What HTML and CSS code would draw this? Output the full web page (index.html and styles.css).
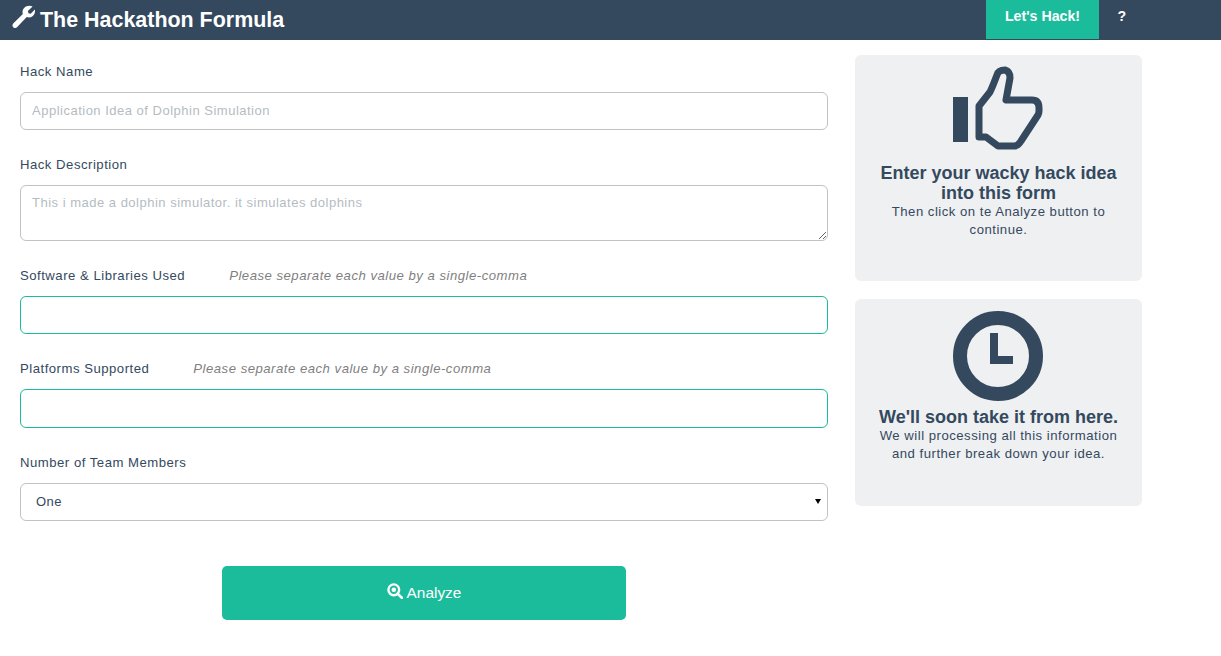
FILE: index.html
```html
<!DOCTYPE html>
<html lang="en">
<head>
<meta charset="utf-8">
<title>The Hackathon Formula</title>
<link rel="stylesheet" href="styles.css">
</head>
<body>
<header class="navbar">
  <div class="brand">
    <svg class="wrench" viewBox="0 0 24 24" aria-hidden="true"><path d="M21.5 1.5 16.6 6.3l.6 2.3 2.3.6 4.4-4.4c.5 3-.4 5.4-2.5 7-1.9 1.4-4 1.6-6 .8L5.2 23.2c-1.1 1.1-3 1.1-4-.1-1-1.1-1-2.7.1-3.8l10-9.9c-.7-2.2-.3-4.4 1.3-6.2 2.3-2.4 5.6-3 8.9-1.7z"/></svg>
    <span class="brand-text">The Hackathon Formula</span>
  </div>
  <nav class="nav">
    <a class="nav-cta">Let's Hack!</a>
    <a class="nav-help">?</a>
  </nav>
</header>
<main class="content">
  <form class="form">
    <div class="field field-name">
      <div class="label-row"><label class="label">Hack Name</label></div>
      <input class="control" type="text" placeholder="Application Idea of Dolphin Simulation">
    </div>
    <div class="field field-desc">
      <div class="label-row"><label class="label">Hack Description</label></div>
      <textarea class="control control-area" placeholder="This i made a dolphin simulator. it simulates dolphins"></textarea>
    </div>
    <div class="field field-soft">
      <div class="label-row"><label class="label">Software &amp; Libraries Used</label><em class="hint">Please separate each value by a single-comma</em></div>
      <input class="control control-accent" type="text">
    </div>
    <div class="field field-plat">
      <div class="label-row"><label class="label">Platforms Supported</label><em class="hint">Please separate each value by a single-comma</em></div>
      <input class="control control-accent control-tall" type="text">
    </div>
    <div class="field field-team">
      <div class="label-row"><label class="label">Number of Team Members</label></div>
      <div class="select-wrap">
        <select class="control control-select"><option>One</option><option>Two</option><option>Three</option></select>
      </div>
    </div>
    <div class="actions">
      <button class="analyze" type="button">
        <svg class="search" viewBox="0 0 16 16" aria-hidden="true"><circle cx="6.8" cy="6.8" r="5.4" fill="none" stroke="#fff" stroke-width="2.4"/><circle cx="6.8" cy="6.8" r="2.3" fill="#fff"/><path d="M10.6 10.6 15 15" stroke="#fff" stroke-width="2.6" stroke-linecap="round"/></svg>
        <span>Analyze</span>
      </button>
    </div>
  </form>
  <aside class="side">
    <section class="card card-one">
      <svg class="card-icon icon-thumb" viewBox="0 0 91 84" aria-hidden="true">
        <rect x="0" y="31" width="15" height="45" fill="#34495e"/>
        <path d="M26 40 37 26C40 20 42 14 44 9 45 5 49 4 52 4 56 5 57 8 57 12L53 34H79Q86 34 86 42V45Q86 47 85 49L68 75Q65 80 61 80H45L33 71H26Z" fill="none" stroke="#34495e" stroke-width="7" stroke-linejoin="round"/>
      </svg>
      <h2 class="card-title">Enter your wacky hack idea into this form</h2>
      <p class="card-text">Then click on te Analyze button to continue.</p>
    </section>
    <section class="card card-two">
      <svg class="card-icon icon-clock" viewBox="0 0 90 90" aria-hidden="true">
        <circle cx="45" cy="45" r="38" fill="none" stroke="#34495e" stroke-width="14"/>
        <path d="M37 22h8v23h15v8H37z" fill="#34495e"/>
      </svg>
      <h2 class="card-title">We'll soon take it from here.</h2>
      <p class="card-text">We will processing all this information and further break down your idea.</p>
    </section>
  </aside>
</main>
</body>
</html>
```
FILE: styles.css
```css
* { box-sizing: border-box; }
html, body { margin: 0; padding: 0; }
body {
  background: #fff;
  color: #34495e;
  font-family: "Liberation Sans", Arial, sans-serif;
  font-size: 13.15px;
  letter-spacing: 0.5px;
}
.navbar {
  height: 40px;
  background: #34495e;
  display: flex;
  justify-content: space-between;
  color: #fff;
}
.brand { display: flex; align-items: center; padding-left: 12px; }
.wrench { width: 23px; height: 23px; fill: #fff; margin-right: 5px; margin-top: -8px; }
.brand-text { font-size: 21.45px; font-weight: 700; letter-spacing: 0; }
.nav { display: flex; margin-right: 76px; height: 39px; }
.nav-cta {
  width: 113px;
  background: #1abc9c;
  font-weight: 700;
  font-size: 14.2px;
  letter-spacing: 0;
  display: flex;
  align-items: center;
  justify-content: center;
  padding-bottom: 7px;
}
.nav-help {
  width: 46px;
  font-weight: 700;
  font-size: 14.2px;
  display: flex;
  align-items: center;
  justify-content: center;
  padding-bottom: 7px;
}
.content { display: flex; align-items: flex-start; }
.form { width: 828px; padding-left: 20px; flex: none; }
.field { display: flex; flex-direction: column; }
.label-row { height: 20px; display: flex; align-items: center; margin-bottom: 11px; }
.field-name { padding-top: 21px; }
.field-desc { padding-top: 24px; }
.field-soft { padding-top: 24px; }
.field-plat { padding-top: 24px; }
.field-team { padding-top: 24px; }
.label { color: #34495e; }
.hint { color: #7f7f7f; margin-left: 44px; }
.control {
  width: 100%;
  height: 38px;
  border: 1px solid #bdc3c7;
  border-radius: 6px;
  padding: 0 11px 2px;
  background: #fff;
  font-family: inherit;
  font-size: 13px;
  letter-spacing: 0.5px;
  color: #34495e;
  display: block;
  outline: none;
}
.control::placeholder { color: #b4bcc2; opacity: 1; }
.control-area { height: 56px; padding-top: 9px; }
.control-accent { border-color: #1abc9c; }
.control-tall { height: 39px; }
.select-wrap { position: relative; }
.select-wrap::after {
  content: "";
  position: absolute;
  right: 7px;
  top: 16px;
  border-left: 3.5px solid transparent;
  border-right: 3.5px solid transparent;
  border-top: 5px solid #000;
  pointer-events: none;
}
.control-select { padding: 0 0 2px 15px; appearance: none; -webkit-appearance: none; }
.actions { padding-top: 45px; }
.analyze {
  width: 404px;
  height: 54px;
  margin-left: 202px;
  padding: 0;
  border: 0;
  border-radius: 5px;
  background: #1abc9c;
  color: #fff;
  font-family: inherit;
  font-size: 15.4px;
  letter-spacing: 0;
  display: flex;
  align-items: center;
  justify-content: center;
  gap: 4px;
}
.search { width: 16px; height: 16px; margin-top: -5px; }
.side { width: 287px; margin-left: 27px; padding-top: 15px; display: flex; flex-direction: column; gap: 18px; flex: none; }
.card {
  background: #eff0f2;
  border-radius: 6px;
  text-align: center;
  padding: 12px 18px 0;
}
.card-one { height: 226px; }
.card-two { height: 207px; }
.card-icon { display: block; margin: 0 auto; }
.icon-thumb { width: 91px; height: 84px; margin-top: -1px; margin-bottom: 13px; }
.icon-clock { width: 90px; height: 90px; margin-bottom: 6px; transform: translateX(-1px); }
.card-title { margin: 0; font-size: 18px; line-height: 20px; font-weight: 700; letter-spacing: 0; }
.card-text { margin: 0; line-height: 18px; }
```
